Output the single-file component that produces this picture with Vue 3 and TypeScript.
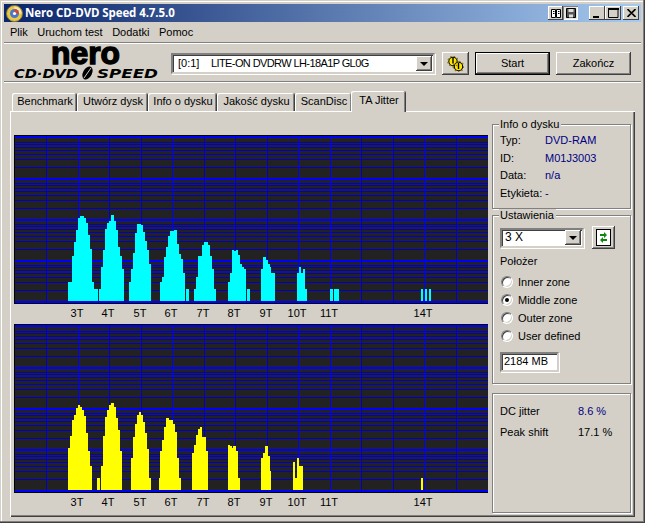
<script setup lang="ts">
type Run = [number, number, number];

const W = 474;
const H = 169;

// Bar runs in 3x reference coordinates: [x0, x1, top]
const cyanRuns: Run[] = [
  [204,216,471],[216,222,393],[222,228,351],[228,234,315],[234,240,279],[240,252,273],[252,258,279],[258,264,294],[264,270,330],[270,276,372],[276,282,471],[282,294,492],
  [297,303,492],[303,309,426],[309,315,375],[315,321,312],[321,327,294],[327,333,288],[333,342,270],[342,348,288],[348,354,315],[354,360,366],[360,366,393],[366,372,432],
  [387,393,471],[393,399,432],[399,405,384],[405,411,324],[411,423,297],[423,429,300],[429,435,321],[435,441,348],[441,447,375],[447,453,417],
  [480,486,471],[486,492,456],[492,498,396],[498,504,366],[504,510,333],[510,522,318],[522,531,315],[531,537,357],[537,543,387],[543,549,402],[549,555,444],[558,567,492],
  [582,588,492],[588,594,456],[594,606,393],[606,612,360],[612,624,351],[624,630,360],[630,636,393],[636,642,432],[642,648,492],
  [684,690,471],[690,696,444],[696,702,375],[702,708,378],[708,714,375],[714,720,390],[720,726,417],[726,732,426],[732,738,432],[741,750,492],
  [783,789,432],[789,798,396],[798,804,405],[804,810,417],[810,813,426],[813,825,444],
  [891,897,444],[897,903,426],[903,909,444],[909,915,432],[915,921,492],
  [990,999,492],[1002,1017,492],
  [1263,1269,492],[1275,1281,492],[1287,1293,492],
];
const yellowRuns: Run[] = [
  [204,210,384],[210,216,348],[216,222,300],[222,228,285],[228,234,264],[234,240,255],[240,246,261],[246,252,270],[252,258,288],[258,264,339],[264,270,393],[270,276,438],
  [291,300,474],
  [303,309,438],[309,315,348],[315,321,291],[321,327,270],[327,333,255],[333,342,249],[342,348,261],[348,354,294],[354,360,330],[360,366,393],
  [393,399,414],[399,405,351],[405,411,312],[411,417,285],[417,423,276],[423,429,285],[429,435,306],[435,441,339],[441,447,387],[447,453,474],
  [477,480,474],[480,486,393],[486,492,360],[492,498,321],[498,507,294],[507,519,300],[519,525,312],[525,531,336],[531,537,414],[537,543,474],
  [576,582,399],[582,588,375],[588,594,345],[594,600,327],[600,606,321],[606,618,351],[618,624,393],
  [684,690,375],[690,696,378],[696,699,384],[699,708,378],[708,714,393],[714,720,474],
  [783,789,414],[789,795,399],[795,804,378],[804,810,408],[810,813,453],
  [879,885,426],[885,891,474],[891,897,414],[897,909,438],
  [1263,1269,474],
];

const vLines = [46, 78, 109, 141, 172, 204, 235, 267, 298, 330, 361, 393, 424, 456];
const brightV = [78, 172, 298, 330, 424];
const labels = [
  ["3T", 77], ["4T", 108], ["5T", 140], ["6T", 171], ["7T", 203], ["8T", 234],
  ["9T", 266], ["10T", 297], ["11T", 329], ["14T", 423],
] as const;

function hLines(): { y: number; major: boolean }[] {
  const out: { y: number; major: boolean }[] = [];
  const bases = [167, 126, 85, 44];
  const decade = 41;
  for (const base of bases) {
    for (let n = 1; n < 9; n++) {
      out.push({ y: Math.round(base - decade * Math.log10(n)), major: n === 1 });
    }
  }
  out.push({ y: 2, major: true });
  return out;
}
const grid = hLines();

function bars(runs: Run[], baseZ: number, chartTopZ: number) {
  return runs.map(([a, b, top]) => ({
    x: a / 3 - 14,
    w: (b - a) / 3,
    y: (top - chartTopZ) / 3,
    h: (baseZ - top) / 3,
    k: `${a}-${top}`,
  }));
}
const charts = [
  { id: "a", color: "#00ffff", bars: bars(cyanRuns, 528, 30) },
  { id: "b", color: "#ffff00", bars: bars(yellowRuns, 510, 12) },
];

const tabs = ["Benchmark", "Utwórz dysk", "Info o dysku", "Jakość dysku", "ScanDisc", "TA Jitter"];
const tabWidths = [64, 70, 68, 77, 56, 54];
const menus = ["Plik", "Uruchom test", "Dodatki", "Pomoc"];
const info = [
  ["Typ:", "DVD-RAM"],
  ["ID:", "M01J3003"],
  ["Data:", "n/a"],
  ["Etykieta:", "-"],
];
const zones = [
  ["Inner zone", false],
  ["Middle zone", true],
  ["Outer zone", false],
  ["User defined", false],
] as const;
</script>

<template>
  <div class="window">
    <div class="titlebar">
      <svg class="app-icon" width="17" height="17" viewBox="0 0 17 17">
        <circle cx="8.5" cy="8.5" r="8" fill="#e8c64a" stroke="#8a7a30" />
        <path d="M8.5 1.5A7 7 0 0 1 15.5 8.5H8.5Z" fill="#f4e9a8" />
        <circle cx="8.5" cy="8.5" r="4.5" fill="#4a78c8" />
        <path d="M8.5 4A4.5 4.5 0 0 1 13 8.5H8.5Z" fill="#d8443a" />
        <circle cx="8.5" cy="8.5" r="1.6" fill="#fff" />
      </svg>
      <span class="title">Nero CD-DVD Speed 4.7.5.0</span>
      <div class="title-tools">
        <span class="tb tb-icon">
          <svg width="10" height="9" viewBox="0 0 10 9"><path d="M.5.5h4v8h-4zM5.5.5h4v8h-4zM2 2.500h1.500M2 4.500h1.500M7 2.500h1.500M7 4.500h1.500" fill="#fff" stroke="#000" /></svg>
        </span>
        <span class="tb tb-icon tb-on">
          <svg width="10" height="10" viewBox="0 0 10 10"><path d="M.5.5h9v9h-9z" fill="#555" stroke="#000" /><path d="M2.500 1h5v3h-5zM3 6.500h4v3h-4z" fill="#ddd" /></svg>
        </span>
      </div>
      <div class="title-btns">
        <span class="tb"><svg width="10" height="10" viewBox="0 0 10 10"><rect x="1" y="8" width="6" height="2" /></svg></span>
        <span class="tb"><svg width="11" height="10" viewBox="0 0 11 10"><path d="M.5 1.500h9.500v8h-9.500z" fill="none" stroke="#000" /><rect x="0" y="0" width="11" height="2" /></svg></span>
        <span class="tb tb-close"><svg width="9" height="8" viewBox="0 0 9 8"><path d="M.5 0 4.500 4 8.500 0M.5 8 4.500 4 8.500 8" fill="none" stroke="#000" stroke-width="1.600" /></svg></span>
      </div>
    </div>

    <div class="menubar">
      <span v-for="m in menus" :key="m" class="menu">{{ m }}</span>
    </div>
    <div class="sep"></div>

    <div class="toolbar">
      <svg class="logo" width="146" height="37" viewBox="0 0 146 37">
        <text x="38" y="19" class="logo-nero" textLength="69" lengthAdjust="spacingAndGlyphs">nero</text>
        <text x="1" y="33" class="logo-sub" textLength="64" lengthAdjust="spacingAndGlyphs">CD·DVD</text>
        <ellipse cx="74.500" cy="28" rx="4.500" ry="7" transform="rotate(28 74.500 28)" fill="#000" />
        <path d="M71 33 78 23" stroke="#d4d0c8" stroke-width="1" />
        <text x="84" y="33" class="logo-sub" textLength="61" lengthAdjust="spacingAndGlyphs">SPEED</text>
      </svg>
      <div class="combo drive">
        <span class="combo-text"><span class="port">[0:1]</span><span class="model">LITE-ON DVDRW LH-18A1P GL0G</span></span>
        <span class="combo-arrow"><i></i></span>
      </div>
      <button class="btn icon-btn">
        <svg width="17" height="16" viewBox="0 0 17 16">
          <g fill="#ffe600" stroke="#000" stroke-width="1.100">
            <circle cx="6" cy="5.500" r="4.200" />
            <circle cx="11.500" cy="10.500" r="4.200" />
          </g>
          <circle cx="6" cy="5.500" r="5.200" fill="none" stroke="#8a7a00" stroke-width="1.200" stroke-dasharray="1.500 2" />
          <circle cx="11.500" cy="10.500" r="5.200" fill="none" stroke="#8a7a00" stroke-width="1.200" stroke-dasharray="1.500 2" />
          <path d="M6 1.500v6M11.500 7v6" stroke="#000" stroke-width="1.400" />
        </svg>
      </button>
      <button class="btn action default">Start</button>
      <button class="btn action">Zakończ</button>
    </div>
    <div class="sep"></div>

    <div class="tabs">
      <span
        v-for="(t, i) in tabs"
        :key="t"
        class="tab"
        :class="{ active: i === 5 }"
        :style="{ width: tabWidths[i] + 'px' }"
      >{{ t }}</span>
    </div>

    <div class="panel">
      <div class="charts">
        <svg
          v-for="c in charts"
          :key="c.id"
          class="chart"
          :width="W"
          :height="H + 20"
          :viewBox="`0 0 ${W} ${H + 20}`"
          shape-rendering="crispEdges"
        >
          <rect x="0" y="0" :width="W" :height="H" fill="#000" />
          <rect x="1" y="1" :width="W - 1" :height="H - 2" fill="#222222" />
          <rect
            v-for="(l, i) in grid"
            :key="'h' + i"
            x="1"
            :y="l.major ? l.y - 1 : l.y"
            :width="W - 1"
            :height="l.major ? 2 : 1"
            :fill="l.major ? '#0000ff' : '#0000c8'"
          />
          <rect
            v-for="x in vLines"
            :key="'v' + x"
            :x="x - 14"
            y="2"
            width="1"
            :height="H - 4"
            :fill="brightV.includes(x) ? '#0000ff' : '#0000c8'"
          />
          <rect
            v-for="b in c.bars"
            :key="b.k"
            :x="b.x"
            :y="b.y"
            :width="b.w"
            :height="b.h"
            :fill="c.color"
          />
          <text
            v-for="l in labels"
            :key="l[0]"
            :x="l[1] - 14"
            :y="H + 13"
            text-anchor="middle"
            class="tick"
            shape-rendering="auto"
          >{{ l[0] }}</text>
        </svg>
      </div>

      <div class="side">
        <div class="group g-info">
          <span class="legend">Info o dysku</span>
          <div v-for="r in info" :key="r[0]" class="info-row">
            <span class="info-key">{{ r[0] }}</span>
            <span class="navy">{{ r[1] }}</span>
          </div>
        </div>

        <div class="group g-set">
          <span class="legend">Ustawienia</span>
          <div class="speed-row">
            <div class="combo speed">
              <span class="combo-text">3 X</span>
              <span class="combo-arrow"><i></i></span>
            </div>
            <button class="btn refresh">
              <svg width="15" height="17" viewBox="0 0 15 17">
                <rect x=".5" y=".5" width="14" height="16" fill="#fff" stroke="#000" />
                <path d="M4 7V5h4V3l3 3-3 3V7zM11 10v2H7v2l-3-3 3-3v2z" fill="#0a8a0a" />
              </svg>
            </button>
          </div>
          <div class="pos-label">Położer</div>
          <label v-for="z in zones" :key="z[0]" class="radio-row">
            <span class="radio" :class="{ on: z[1] }"></span>
            <span>{{ z[0] }}</span>
          </label>
          <div class="mb-input">2184 MB</div>
        </div>

        <div class="group g-res">
          <div class="res-row"><span>DC jitter</span><span class="navy">8.6 %</span></div>
          <div class="res-row"><span>Peak shift</span><span>17.1 %</span></div>
        </div>
      </div>
    </div>
  </div>
</template>

<style scoped>
.window {
  width: 645px;
  height: 523px;
  box-sizing: border-box;
  padding: 4px 4px 0;
  background: #d4d0c8;
  color: #000;
  font: 11px/13px "Liberation Sans", Arial, sans-serif;
  overflow: hidden;
  box-shadow: inset -1px -1px 0 #404040, inset -2px -2px 0 #808080, inset 1px 1px 0 #d4d0c8, inset 2px 2px 0 #fff;
}
.titlebar {
  height: 18px;
  display: flex;
  align-items: center;
  background: linear-gradient(90deg, #0a246a, #a6caf0);
  color: #fff;
  padding-left: 2px;
}
.app-icon { margin: 0 2px 0 0; flex: none; }
.title {
  font: bold 11.5px/18px "Open Sans", sans-serif;
  white-space: nowrap;
  letter-spacing: -.1px;
}
.title-tools { display: flex; margin-left: auto; }
.title-btns { display: flex; margin: 0 2px 0 11px; }
.tb {
  width: 16px;
  height: 14px;
  box-sizing: border-box;
  background: #d4d0c8;
  display: flex;
  align-items: center;
  justify-content: center;
  box-shadow: inset -1px -1px 0 #404040, inset 1px 1px 0 #fff;
}
.tb-icon { width: 15px; }
.tb-on { background: #e8e6e0; box-shadow: inset 1px 1px 0 #808080, inset -1px -1px 0 #fff; }
.tb-close { margin-left: 2px; }
.menubar {
  height: 19px;
  margin-top: 1px;
  display: flex;
  align-items: center;
  gap: 9.500px;
  padding-left: 6px;
}
.sep {
  height: 1px;
  background: #808080;
  border-bottom: 1px solid #fff;
  flex: none;
}
.toolbar {
  height: 37px;
  display: flex;
  align-items: flex-start;
}
.logo { margin: 1px 0 0 9px; flex: none; overflow: visible; }
.logo-nero {
  font: bold 32px "Liberation Sans", sans-serif;
  fill: #000;
  stroke: #000;
  stroke-width: 1.400px;
}
.logo-sub {
  font: italic bold 13px "DejaVu Sans", sans-serif;
  fill: #000;
}
.combo {
  box-sizing: border-box;
  background: #fff;
  display: flex;
  align-items: center;
  border: 2px solid;
  border-color: #808080 #d4d0c8 #d4d0c8 #808080;
  box-shadow: inset 1px 1px 0 #404040, 1px 1px 0 #fff;
}
.drive {
  width: 264px;
  height: 21px;
  margin: 9px 7px 0 12px;
}
.combo-text { flex: 1; padding-left: 5px; white-space: nowrap; }
.port { display: inline-block; width: 33px; }
.model { letter-spacing: -.6px; }
.combo-arrow {
  width: 16px;
  height: 15px;
  margin-right: 1px;
  background: #d4d0c8;
  display: flex;
  align-items: center;
  justify-content: center;
  box-shadow: inset -1px -1px 0 #404040, inset 1px 1px 0 #fff, inset -2px -2px 0 #808080;
}
.combo-arrow i {
  width: 0;
  height: 0;
  border: 4px solid transparent;
  border-top: 4px solid #000;
  border-bottom: 0;
}
.btn {
  box-sizing: border-box;
  padding: 0;
  border: 0;
  background: #d4d0c8;
  font: inherit;
  color: #000;
  display: flex;
  align-items: center;
  justify-content: center;
  box-shadow: inset -1px -1px 0 #404040, inset 1px 1px 0 #fff, inset -2px -2px 0 #808080;
}
.icon-btn { width: 27px; height: 23px; margin: 8px 6px 0 0; }
.action { width: 75px; height: 23px; margin: 8px 6px 0 0; }
.default {
  outline: 1px solid #000;
  outline-offset: -1px;
  box-shadow: inset -2px -2px 0 #404040, inset 2px 2px 0 #fff, inset -3px -3px 0 #808080;
}
.tabs {
  height: 28px;
  display: flex;
  align-items: flex-end;
  padding-left: 8px;
  position: relative;
  z-index: 1;
}
.tab {
  box-sizing: border-box;
  height: 18px;
  line-height: 17px;
  padding-left: 2px;
  text-align: center;
  white-space: nowrap;
  background: #d4d0c8;
  border-radius: 2px 2px 0 0;
  box-shadow: inset 1px 1px 0 #fff, inset -1px 0 0 #808080, 1px 0 0 #404040;
  margin-right: 1px;
}
.tab.active {
  height: 21px;
  line-height: 18px;
  margin-bottom: -1px;
  margin-right: 0;
  margin-left: -1px;
  padding-bottom: 3px;
}
.panel {
  margin: 0 6px;
  height: 406px;
  box-sizing: border-box;
  display: flex;
  align-items: flex-start;
  box-shadow: inset 1px 1px 0 #fff, inset -1px -1px 0 #404040, inset -2px -2px 0 #808080;
}
.charts {
  display: flex;
  flex-direction: column;
  padding: 24px 0 0 4px;
  flex: none;
}
.chart { display: block; }
.tick {
  font: 11px "Liberation Sans", sans-serif;
  fill: #000;
}
.side {
  width: 140px;
  margin: 13px 0 0 4px;
  display: flex;
  flex-direction: column;
  flex: none;
}
.group {
  position: relative;
  box-sizing: border-box;
  width: 139px;
  border: 1px solid #808080;
  box-shadow: 1px 1px 0 #fff, inset 1px 1px 0 #fff;
}
.legend {
  position: absolute;
  left: 6px;
  top: -7px;
  padding: 0 2px 0 1px;
  background: #d4d0c8;
}
.g-info { height: 85px; padding: 9px 0 0 7px; }
.info-row { height: 17.700px; line-height: 13px; display: flex; }
.info-key { width: 45px; flex: none; }
.navy { color: #000080; }
.g-set { height: 169px; margin-top: 6px; padding: 10px 0 0 7px; }
.speed-row { display: flex; align-items: center; }
.speed { width: 84px; height: 20px; }
.speed .combo-text { padding-left: 3px; font-size: 12px; }
.refresh { width: 23px; height: 23px; margin-left: 8px; }
.pos-label { margin-top: 6px; height: 15px; }
.radio-row { display: flex; align-items: center; height: 18px; }
.pos-label + .radio-row { margin-top: 3px; }
.radio {
  width: 12px;
  height: 12px;
  box-sizing: border-box;
  border-radius: 50%;
  margin: 0 5px 0 1px;
  background: #fff;
  border: 1px solid;
  border-color: #808080 #fff #fff #808080;
  box-shadow: inset 1px 1px 0 #404040, inset -1px -1px 0 #d4d0c8;
  display: flex;
  align-items: center;
  justify-content: center;
}
.radio.on::after {
  content: "";
  width: 4px;
  height: 4px;
  border-radius: 50%;
  background: #000;
}
.mb-input {
  width: 59px;
  height: 20px;
  box-sizing: border-box;
  margin-top: 7px;
  background: #fff;
  border: 2px solid;
  border-color: #808080 #d4d0c8 #d4d0c8 #808080;
  box-shadow: inset 1px 1px 0 #404040, 1px 1px 0 #fff;
  line-height: 15px;
  padding-left: 2px;
}
.g-res { height: 120px; margin-top: 9px; padding: 11px 0 0 7px; }
.res-row { display: flex; height: 21px; }
.res-row span:first-child { width: 78px; }
</style>

<style>
html, body { margin: 0; background: #d4d0c8; }
</style>
